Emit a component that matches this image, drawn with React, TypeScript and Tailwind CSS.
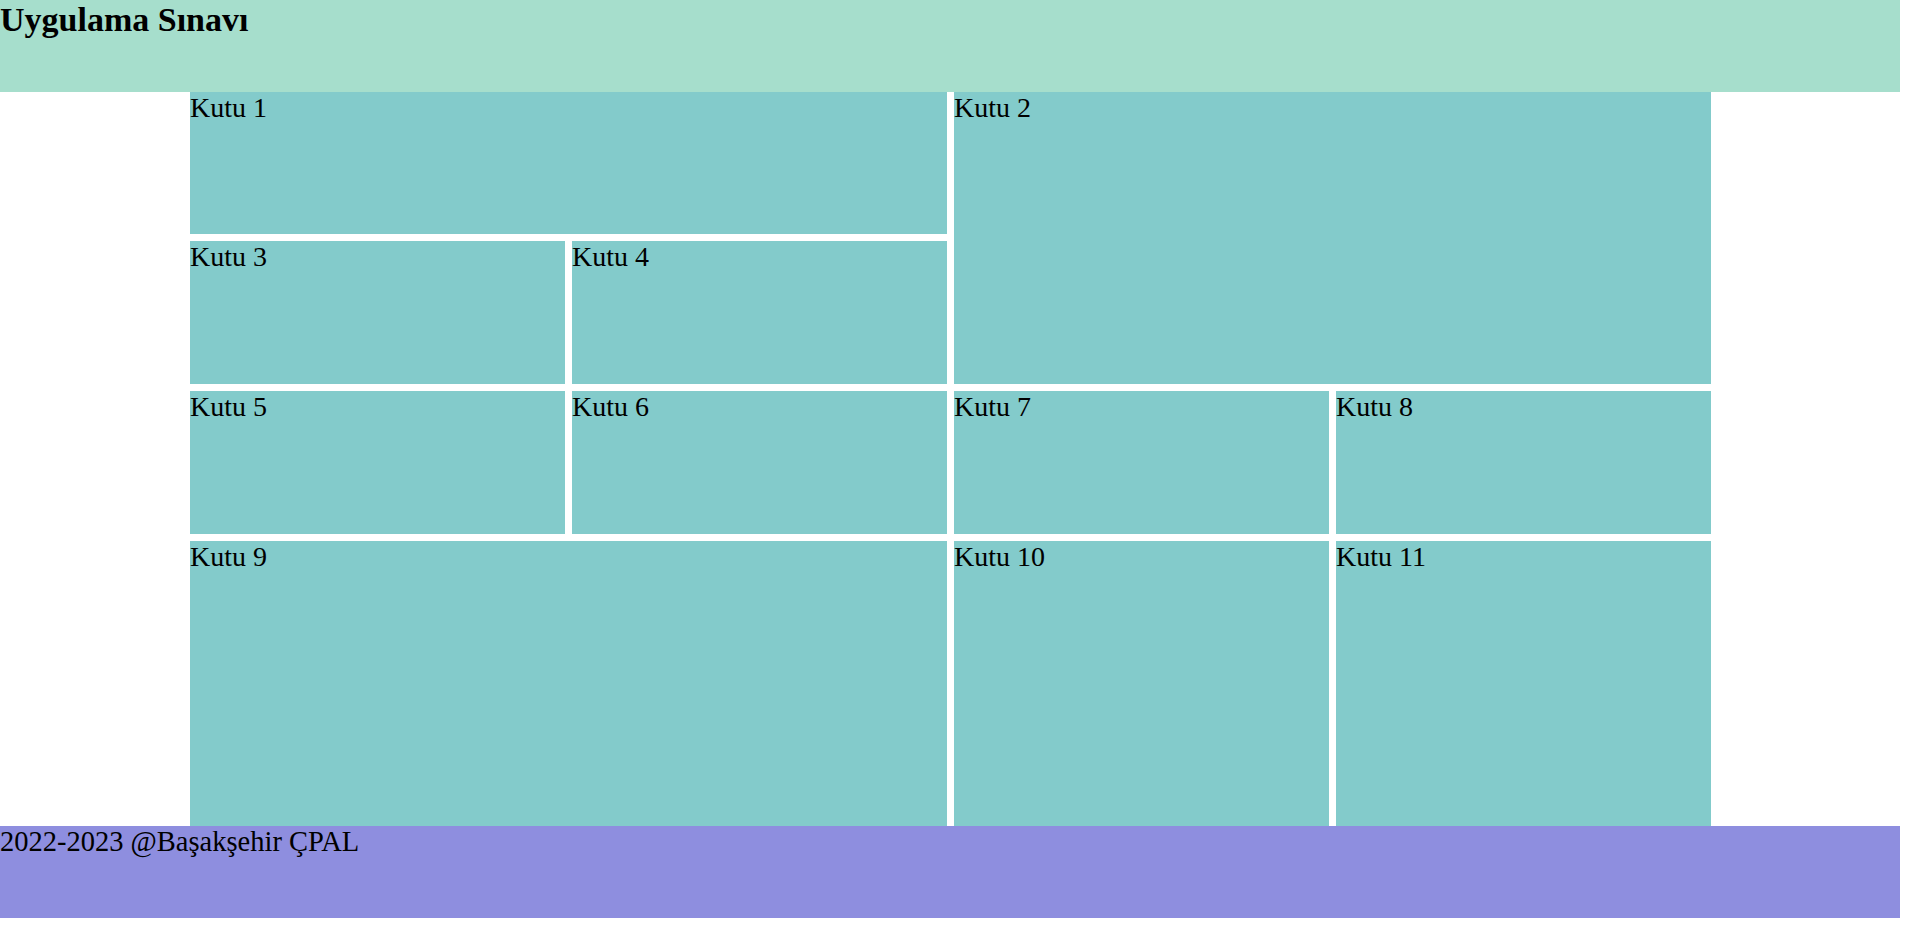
export default function App() {
  return (
    <div className="w-[1900px] bg-white text-black font-['Liberation_Serif','Times_New_Roman',serif]">
      {/* Header */}
      <header className="h-[92px] bg-[#a6decc]">
        <h1 className="text-[34px] font-bold leading-[1.15]">Uygulama Sınavı</h1>
      </header>

      {/* Boxes */}
      <main className="ml-[190px] w-[1521px] grid grid-cols-4 grid-rows-[142px_143px_143px_285px] gap-[7px] text-[28px] leading-[1.15]">
        <Box className="col-span-2">Kutu 1</Box>
        <Box className="col-span-2 row-span-2">Kutu 2</Box>
        <Box>Kutu 3</Box>
        <Box>Kutu 4</Box>
        <Box>Kutu 5</Box>
        <Box>Kutu 6</Box>
        <Box>Kutu 7</Box>
        <Box>Kutu 8</Box>
        <Box className="col-span-2">Kutu 9</Box>
        <Box>Kutu 10</Box>
        <Box>Kutu 11</Box>
      </main>

      {/* Footer */}
      <footer className="h-[92px] bg-[#8e8edf] text-[28.5px] leading-[1.15]">
        2022-2023 @Başakşehir ÇPAL
      </footer>
    </div>
  );
}

function Box({ children, className = "" }: { children: React.ReactNode; className?: string }) {
  return <div className={`bg-[#83cbcb] ${className}`}>{children}</div>;
}
